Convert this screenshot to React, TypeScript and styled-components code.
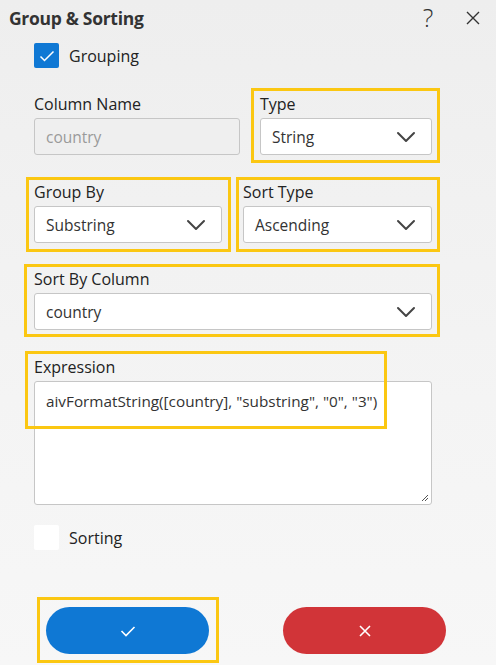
import React from 'react';
import styled, { createGlobalStyle } from 'styled-components';

const GlobalStyle = createGlobalStyle`
    html, body {
        margin: 0;
        padding: 0;
    }
    body {
        font-family: 'Open Sans', 'Noto Sans', sans-serif;
        color: #222;
    }
`;

const Dialog = styled.div`
    width: 496px;
    height: 665px;
    box-sizing: border-box;
    overflow: hidden;
    background: linear-gradient(180deg, #eeeeee 0%, #f4f4f4 60%, #f7f7f7 100%);
    display: flex;
    flex-direction: column;
`;

const Header = styled.div`
    display: flex;
    align-items: center;
    height: 36px;
    padding: 0 12px 0 9px;
`;

const Title = styled.div`
    flex: 1;
    font-size: 17.5px;
    font-weight: 700;
    color: #333;
    letter-spacing: -0.3px;
`;

const IconButton = styled.button`
    border: none;
    background: none;
    padding: 0;
    margin-left: ${props => props.$gap || 20}px;
    width: 22px;
    height: 22px;
    display: flex;
    align-items: center;
    justify-content: center;
    color: #333;
    cursor: pointer;
`;

const HelpGlyph = styled.span`
    font-family: 'Open Sans', sans-serif;
    font-size: 25px;
    font-weight: 300;
    line-height: 1;
    margin-top: -2px;
`;

const Body = styled.div`
    display: flex;
    flex-direction: column;
    padding: 7px 64px 0 34px;
`;

const CheckRow = styled.label`
    display: flex;
    align-items: center;
    gap: 10px;
    font-size: 16px;
    color: #222;
    margin-top: ${props => props.$top || 0}px;
`;

const Box = styled.span`
    width: 25px;
    height: 25px;
    border-radius: 2px;
    box-sizing: border-box;
    display: flex;
    align-items: center;
    justify-content: center;
    background: ${props => (props.$checked ? '#0f78d4' : '#ffffff')};
`;

const Row = styled.div`
    display: flex;
    gap: ${props => props.$gap || 20}px;
    margin-top: ${props => props.$top || 26}px;
`;

const Field = styled.div`
    position: relative;
    display: flex;
    flex-direction: column;
    width: ${props => props.$width || '100%'};
`;

const Label = styled.div`
    font-size: 16px;
    line-height: 20px;
    color: #222;
    margin-bottom: 4px;
`;

const Control = styled.div`
    height: 37px;
    box-sizing: border-box;
    border: 1px solid #c6c6c6;
    border-radius: 3px;
    background: ${props => (props.$disabled ? '#efefef' : '#ffffff')};
    color: ${props => (props.$disabled ? '#9a9a9a' : '#333')};
    display: flex;
    align-items: center;
    justify-content: space-between;
    padding: 0 15px 0 11px;
    font-size: 15.5px;
`;

const TextArea = styled.div`
    position: relative;
    height: 124px;
    box-sizing: border-box;
    border: 1px solid #c6c6c6;
    border-radius: 3px;
    background: #ffffff;
    padding: 9px 11px;
    font-size: 15.3px;
    color: #333;
`;

const Grip = styled.svg`
    position: absolute;
    right: 2px;
    bottom: 2px;
`;

const Highlight = styled.div`
    position: absolute;
    pointer-events: none;
    border: 3px solid #fbc712;
    top: ${props => props.$t}px;
    left: ${props => props.$l}px;
    right: ${props => props.$r}px;
    bottom: ${props => props.$b}px;
`;

const Footer = styled.div`
    display: flex;
    justify-content: space-between;
    padding: 57px 50px 0 46px;
`;

const ActionWrap = styled.div`
    position: relative;
`;

const Action = styled.button`
    width: 163px;
    height: 47px;
    border: none;
    border-radius: 24px;
    background: ${props => props.$color};
    display: flex;
    align-items: center;
    justify-content: center;
    cursor: pointer;
`;

const Chevron = () => (
    <svg width="20" height="12" viewBox="0 0 20 12" fill="none">
        <path d="M2 2 L10 10 L18 2" stroke="#444" strokeWidth="2" strokeLinecap="round" strokeLinejoin="round" />
    </svg>
);

const Select = ({ value }: { value: string }) => (
    <Control>
        <span>{value}</span>
        <Chevron />
    </Control>
);

const App = () => (
    <Dialog>
        <GlobalStyle />
        <Header>
            <Title>Group &amp; Sorting</Title>
            <IconButton>
                <HelpGlyph>?</HelpGlyph>
            </IconButton>
            <IconButton $gap={23}>
                <svg width="16" height="16" viewBox="0 0 16 16">
                    <path d="M2 2 L14 14 M14 2 L2 14" stroke="#333" strokeWidth="1.4" />
                </svg>
            </IconButton>
        </Header>
        <Body>
            <CheckRow>
                <Box $checked>
                    <svg width="16" height="12" viewBox="0 0 16 12">
                        <path d="M1.5 6.5 L5.5 10.5 L14.5 1.5" stroke="#fff" strokeWidth="1.5" fill="none" />
                    </svg>
                </Box>
                Grouping
            </CheckRow>

            <Row $top={26}>
                <Field $width="206px">
                    <Label>Column Name</Label>
                    <Control $disabled>country</Control>
                </Field>
                <Field $width="172px">
                    <Label>Type</Label>
                    <Select value="String" />
                    <Highlight $t={-6} $l={-9} $r={-8} $b={-8} />
                </Field>
            </Row>

            <Row $top={27} $gap={21}>
                <Field $width="188px">
                    <Label>Group By</Label>
                    <Select value="Substring" />
                    <Highlight $t={-5} $l={-8} $r={-9} $b={-9} />
                </Field>
                <Field $width="189px">
                    <Label>Sort Type</Label>
                    <Select value="Ascending" />
                    <Highlight $t={-5} $l={-7} $r={-8} $b={-9} />
                </Field>
            </Row>

            <Row $top={26}>
                <Field>
                    <Label>Sort By Column</Label>
                    <Select value="country" />
                    <Highlight $t={-5} $l={-10} $r={-8} $b={-7} />
                </Field>
            </Row>

            <Row $top={27}>
                <Field>
                    <Label>Expression</Label>
                    <TextArea>
                        aivFormatString([country], "substring", "0", "3")
                        <Grip width="10" height="10" viewBox="0 0 10 10">
                            <path d="M9 3 L3 9 M9 6 L6 9" stroke="#555" strokeWidth="1" />
                        </Grip>
                    </TextArea>
                    <Highlight $t={-6} $l={-9} $r={45} $b={76} />
                </Field>
            </Row>

            <CheckRow $top={20}>
                <Box />
                Sorting
            </CheckRow>
        </Body>
        <Footer>
            <ActionWrap>
                <Action $color="#0f78d4">
                    <svg width="16" height="12" viewBox="0 0 16 12">
                        <path d="M1.5 6 L6 10.5 L14.5 2" stroke="#fff" strokeWidth="1.6" fill="none" />
                    </svg>
                </Action>
                <Highlight $t={-10} $l={-9} $r={-10} $b={-9} />
            </ActionWrap>
            <Action $color="#d13438">
                <svg width="14" height="14" viewBox="0 0 14 14">
                    <path d="M2 2 L12 12 M12 2 L2 12" stroke="#fff" strokeWidth="1.6" />
                </svg>
            </Action>
        </Footer>
    </Dialog>
);

export default App;
